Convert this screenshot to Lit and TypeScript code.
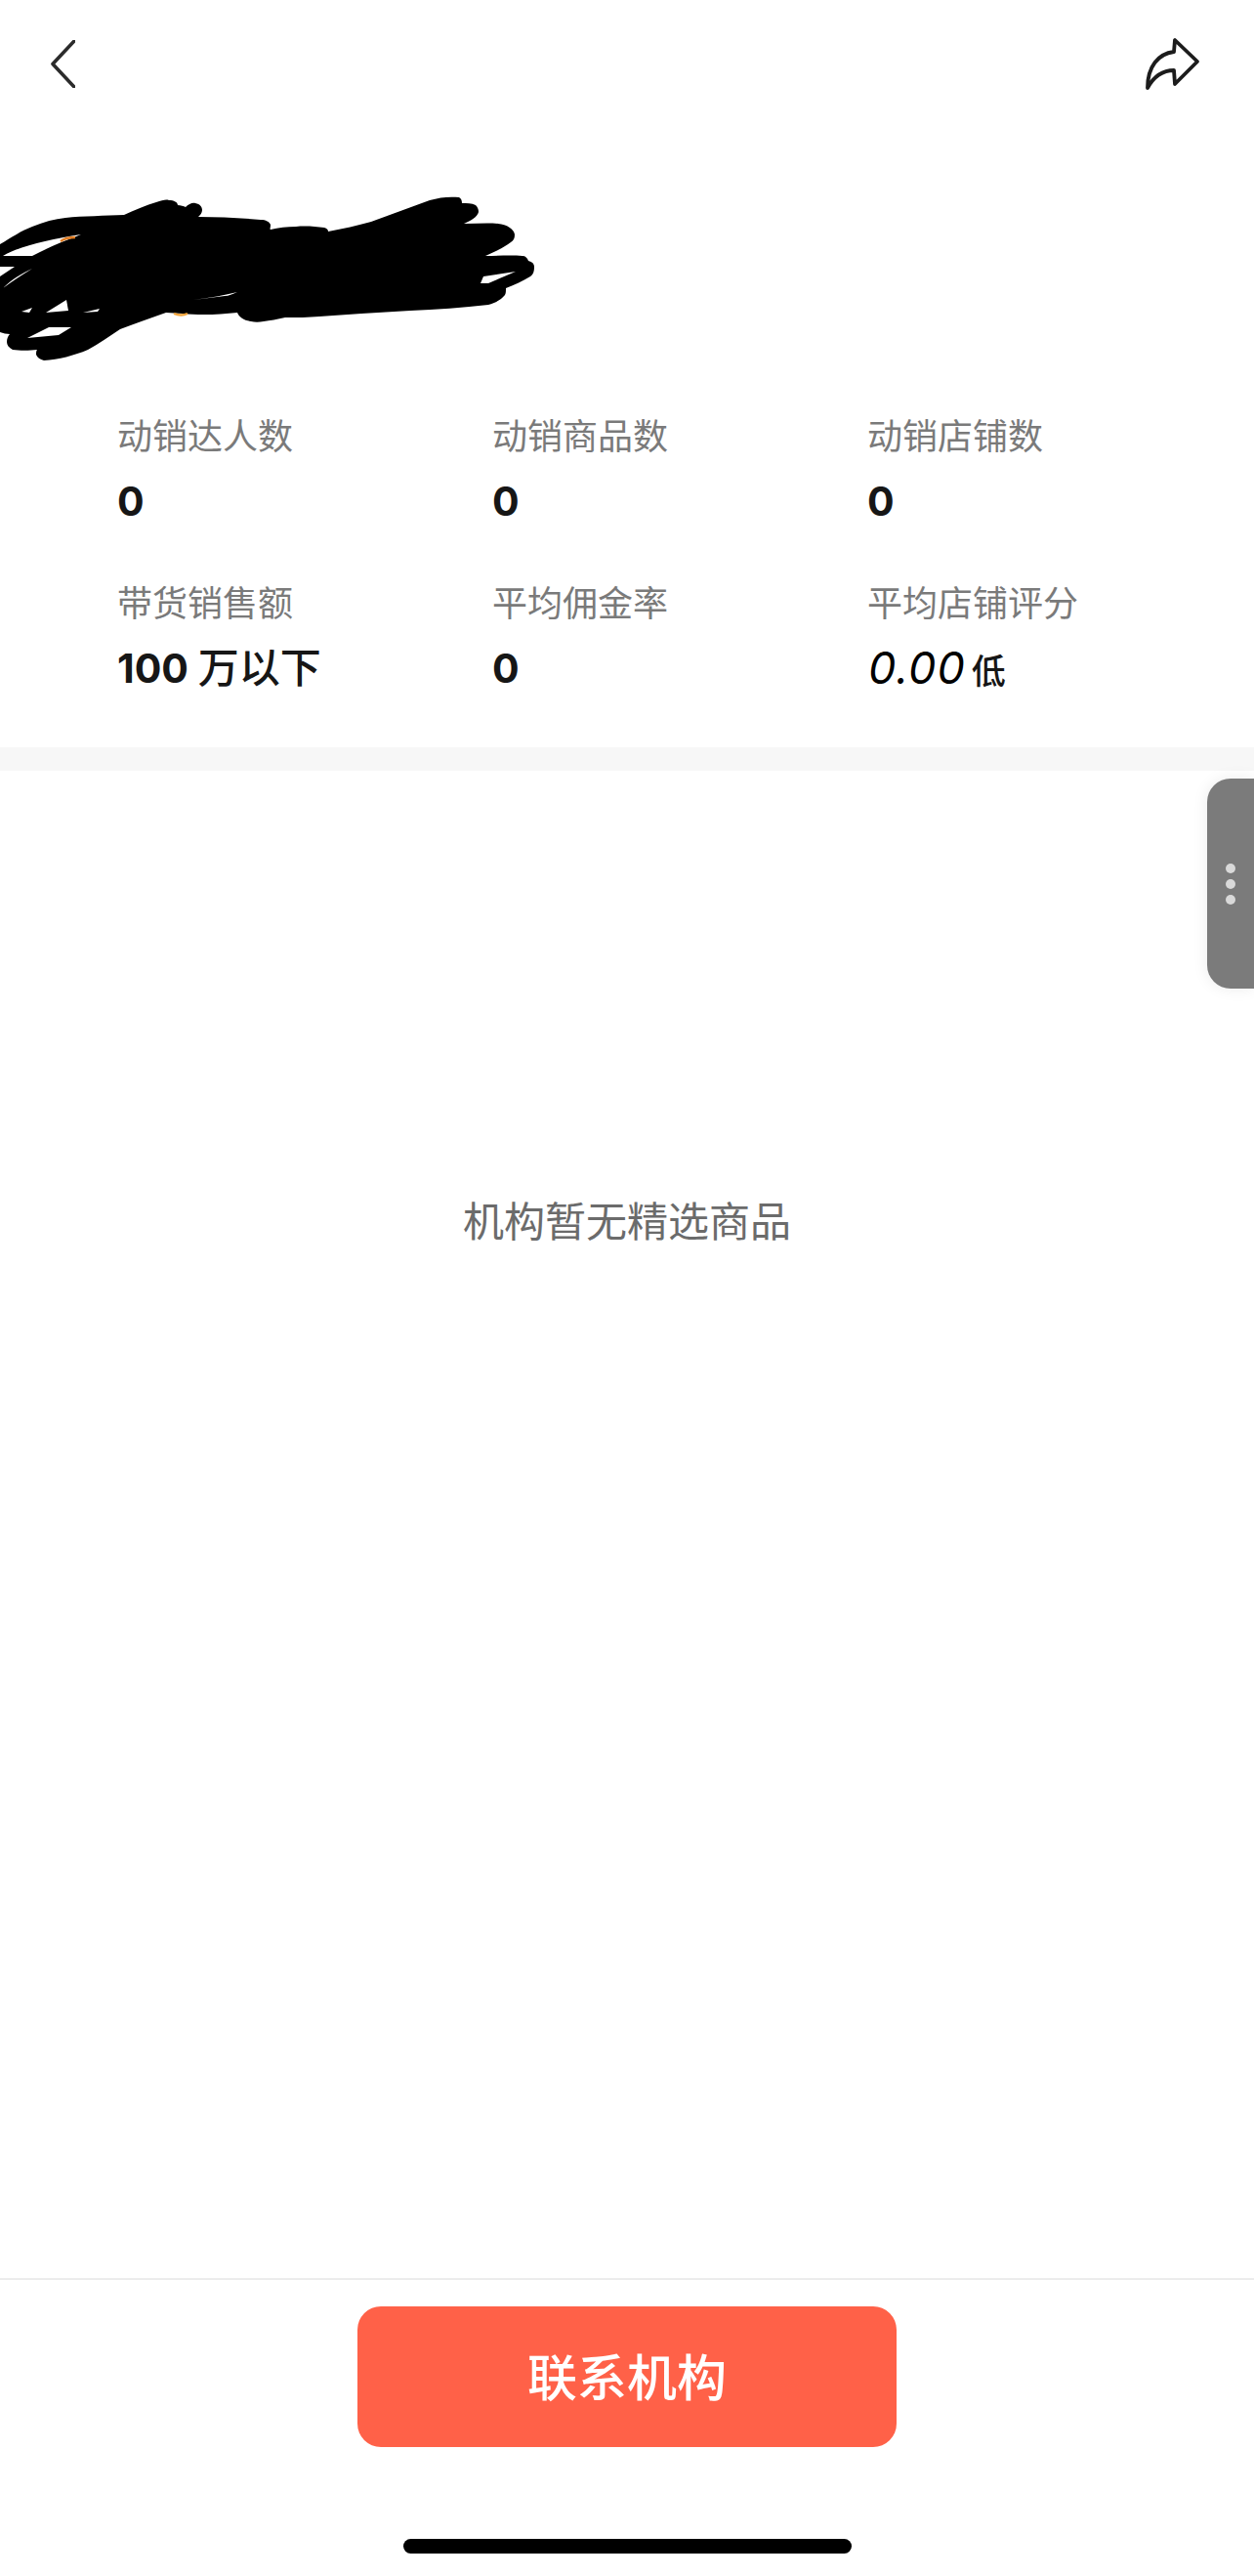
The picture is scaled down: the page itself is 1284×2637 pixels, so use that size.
import { LitElement, css, html, svg } from "lit";
import { customElement } from "lit/decorators.js";

const stats = [
  { label: "动销达人数", value: "0" },
  { label: "动销商品数", value: "0" },
  { label: "动销店铺数", value: "0" },
  { label: "带货销售额", value: "100", unit: "万以下" },
  { label: "平均佣金率", value: "0" },
];

// redaction scribble over the account name, in page pixels
const scribbleOutline =
  "M0 250 C12 243 22 236 33 232 C45 227 56 224 67 223 C85 221 108 221 127 220 C138 215 150 210 160 207 C166 205 170 204 173 205 C178 205 182 207 182 210 C185 210 188 211 190 212 C193 209 197 207 200 208 C205 209 207 212 207 215 C207 218 205 220 203 222 C225 222 245 223 267 225 C272 225 276 227 277 230 C277 233 276 235 277 235 C285 233 294 232 303 232 C313 231 323 232 332 233 C335 234 336 235 336 237 C351 234 366 231 380 227 C400 220 420 212 440 205 C450 202 460 201 470 202 C472 203 473 205 473 208 C478 208 483 208 487 210 C489 212 490 214 490 217 C489 222 482 226 475 229 C487 229 499 228 510 229 C519 230 526 234 527 240 C527 244 526 246 523 248 C515 254 506 258 497 262 C510 262 523 261 535 262 C538 262 540 264 541 267 C545 268 547 270 547 273 C547 278 546 281 543 283 C535 288 526 292 518 295 C518 298 518 300 517 302 C513 307 507 310 500 312 C474 315 447 317 420 318 C403 319 387 320 370 321 C356 322 341 323 327 324 C316 325 304 325 292 325 C284 327 276 328 270 329 C265 330 261 330 257 329 C250 328 245 325 243 320 C225 322 205 323 187 321 L170 320 C154 326 138 331 123 337 C112 344 101 352 90 358 C76 364 60 368 45 369 C41 368 38 366 37 363 C37 361 37 359 38 358 C30 359 20 359 13 358 C9 356 7 353 7 350 C7 347 8 344 10 342 C7 342 3 341 0 340 Z";

const scribbleHoles = [
  "M3 262 C20 252 50 245 83 240 C65 247 48 254 33 262 Z",
  "M0 273 L15 273 L0 283 Z",
  "M3 295 C12 286 22 280 33 275 C22 282 12 288 3 295 Z",
  "M22 319 L33 315 L30 320 Z",
  "M47 320 L68 307 L70 318 Z",
  "M85 320 L102 316 L100 319 Z",
  "M28 346 L50 335 L73 335 L60 343 Z",
  "M198 307 C215 305 230 302 243 299 C238 301 234 303 230 303 Z",
  "M492 290 L495 283 L528 278 L500 290 Z",
];

@customElement("app-root")
export class AppRoot extends LitElement {
  renderStat(s: { label: string; value: string; unit?: string }) {
    return html`
      <div class="stat">
        <div class="label">${s.label}</div>
        <div class="value">${s.value}${s.unit ? html` <span class="unit">${s.unit}</span>` : ""}</div>
      </div>
    `;
  }

  render() {
    return html`
      <div class="page">
        <div class="nav">
          <svg class="back" viewBox="0 0 25 49" width="25" height="49">
            <path d="M24 1 L2 24.5 L24 48" fill="none" stroke="#2b2b2b" stroke-width="3.6" stroke-linecap="round" stroke-linejoin="round" />
          </svg>
          <svg class="share" viewBox="1170 36 60 60" width="60" height="60">
            <path
              d="M1226 63 L1203 41 L1202 53 C1186 55 1175 68 1175 90 C1181 79 1190 72 1202 72 L1203 86 Z"
              fill="none"
              stroke="#1c1c1c"
              stroke-width="3.8"
              stroke-linecap="round"
              stroke-linejoin="round"
            />
          </svg>
        </div>

        <svg class="scribble" viewBox="0 190 560 190" width="560" height="190">
          <path d=${scribbleOutline} fill="#000" />
          ${scribbleHoles.map((d) => svg`<path d=${d} fill="#fff" />`)}
          <path d="M62 247 C66 244 71 243 77 243" fill="none" stroke="#e07b20" stroke-width="2.4" />
          <path d="M178 321 C183 323 188 323 192 321" fill="none" stroke="#f2a53c" stroke-width="2.4" />
        </svg>

        <div class="stats">
          ${stats.map((s) => this.renderStat(s))}
          <div class="stat">
            <div class="label">平均店铺评分</div>
            <div class="score"><span class="num">0.00</span><span class="level">低</span></div>
          </div>
        </div>

        <div class="band"></div>

        <div class="content">
          <div class="empty">机构暂无精选商品</div>
          <div class="handle">
            <span></span>
            <span></span>
            <span></span>
          </div>
        </div>

        <div class="footer">
          <div class="btn">联系机构</div>
          <div class="home"></div>
        </div>
      </div>
    `;
  }

  static styles = css`
    :host {
      display: block;
      font-family: Inter, "Noto Sans CJK SC", sans-serif;
    }
    * {
      box-sizing: border-box;
    }
    .page {
      height: 2637px;
      display: flex;
      flex-direction: column;
      background: #fff;
    }
    .nav {
      height: 190px;
      display: flex;
      justify-content: space-between;
      align-items: flex-start;
      padding: 36px 54px 0 52px;
    }
    .back {
      margin-top: 5px;
    }
    .scribble {
      display: block;
      flex: none;
    }
    .stats {
      display: grid;
      grid-template-columns: 384px 384px 1fr;
      row-gap: 53px;
      padding: 41px 0 55px 120px;
    }
    .label {
      font-size: 36px;
      line-height: 52px;
      color: #7a7a7a;
    }
    .value {
      margin-top: 14px;
      font-size: 41px;
      line-height: 52px;
      font-weight: 700;
      color: #161616;
    }
    .unit {
      font-size: 42px;
      font-weight: 500;
    }
    .score {
      margin-top: 14px;
      height: 52px;
      display: flex;
      align-items: baseline;
      color: #000;
      line-height: 52px;
    }
    .num {
      margin-left: 1px;
      font-size: 45px;
      font-style: italic;
      letter-spacing: 1px;
    }
    .level {
      margin-left: 6px;
      font-size: 35px;
      font-weight: 500;
      color: #161616;
    }
    .band {
      height: 24px;
      flex: none;
      background: #f7f7f7;
    }
    .content {
      flex: 1;
      position: relative;
      padding-top: 432px;
      text-align: center;
    }
    .empty {
      font-size: 42px;
      line-height: 60px;
      color: #6b6b6b;
    }
    .handle {
      position: absolute;
      top: 8px;
      right: 0;
      width: 48px;
      height: 215px;
      background: #7b7b7b;
      border-radius: 24px 0 0 24px;
      box-shadow: 0 0 16px rgba(0, 0, 0, 0.08);
      display: flex;
      flex-direction: column;
      align-items: center;
      justify-content: center;
      gap: 6px;
    }
    .handle span {
      width: 10px;
      height: 10px;
      border-radius: 50%;
      background: #d9d9d9;
    }
    .footer {
      height: 305px;
      flex: none;
      border-top: 2px solid #ececec;
      display: flex;
      flex-direction: column;
      align-items: center;
      padding-top: 27px;
    }
    .btn {
      width: 552px;
      height: 144px;
      padding-bottom: 5px;
      border-radius: 24px;
      background: #ff6148;
      color: #fff;
      font-size: 51px;
      font-weight: 500;
      display: flex;
      align-items: center;
      justify-content: center;
    }
    .home {
      margin-top: 94px;
      width: 459px;
      height: 15px;
      border-radius: 8px;
      background: #000;
    }
  `;
}
